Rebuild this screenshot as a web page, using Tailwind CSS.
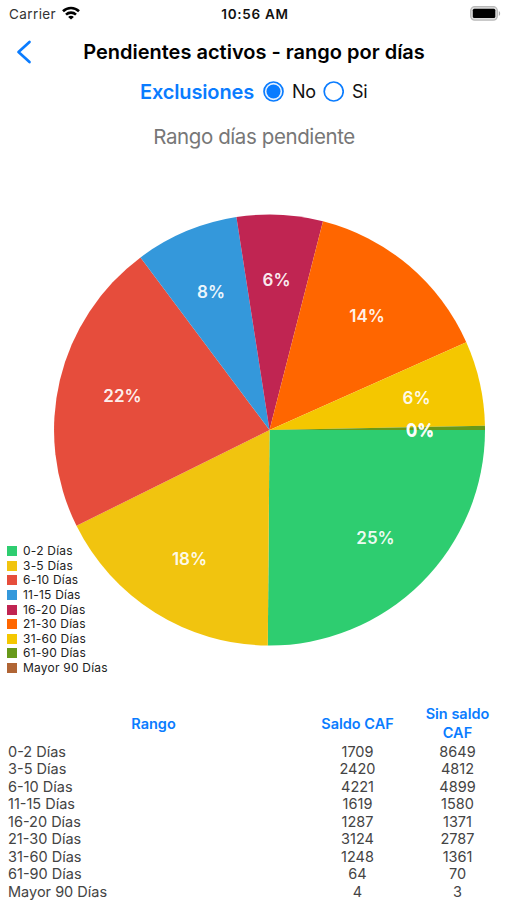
<!DOCTYPE html>
<html lang="es">
<head>
<meta charset="utf-8">
<title>Pendientes activos</title>
<script src="https://cdn.jsdelivr.net/npm/@tailwindcss/browser@4"></script>
</head>
<body class="bg-white">
<div class="relative flex h-[900px] w-[507px] flex-col overflow-hidden bg-white font-[Inter,sans-serif] text-black">
  <header class="grid h-7 grid-cols-3 items-center pr-[6px] pl-[9px]">
    <div class="flex items-center gap-[6px]">
      <span class="text-[13.5px] tracking-[0.4px] text-[#333]">Carrier</span>
      <svg class="-mt-[2px] h-[14px] w-[18px]" viewBox="0 0 18 14" fill="none" stroke="#000" stroke-width="2.600">
        <path d="M1 5.200C5.500 .9 12.500 .9 17 5.200"/><path d="M4 8.600C6.800 6 11.200 6 14 8.600"/><path d="M9 13.600L6.100 10.900C7.700 9.400 10.300 9.400 11.900 10.900Z" fill="#000" stroke="none"/>
      </svg>
    </div>
    <div class="text-center text-[13.5px] font-semibold tracking-[0.7px] whitespace-nowrap text-[#111]">10:56 AM</div>
    <svg class="-mt-[1px] h-[15px] w-[31px] justify-self-end" viewBox="0 0 31 15">
      <rect x=".7" y=".7" width="26.600" height="13.400" rx="4" fill="#ddd" stroke="#b8b8b8" stroke-width="1.300"/>
      <rect x="2.800" y="2.700" width="22.500" height="9.400" rx="1.500" fill="#000"/>
      <path d="M28.800 5v5c1.800-.8 1.800-4.200 0-5Z" fill="#aaa"/>
    </svg>
  </header>
  <nav class="grid h-[48px] grid-cols-[36px_1fr_35px] items-center">
    <svg class="ml-[16px] h-6 w-4" viewBox="0 0 16 24" fill="none" stroke="#0a7cff" stroke-width="2.700" stroke-linecap="round" stroke-linejoin="round"><path d="M13.500 2L2.500 12L13.500 22"/></svg>
    <h1 class="text-center text-[20px] font-semibold whitespace-nowrap">Pendientes activos - rango por días</h1>
  </nav>
  <div class="flex h-8 items-center pl-[140px] whitespace-nowrap">
    <span class="w-[123px] text-[20px] font-semibold tracking-[-0.15px] text-[#0a7cff]">Exclusiones</span>
    <svg class="size-[21px]" viewBox="0 0 21 21"><circle cx="10.500" cy="10.500" r="9.500" fill="#e8f3ff" stroke="#0a7cff" stroke-width="1.700"/><circle cx="10.500" cy="10.500" r="7" fill="#0a7cff"/></svg>
    <span class="ml-[8px] w-[31px] text-[18px] tracking-[-0.4px] text-[#111]">No</span>
    <svg class="size-[21px]" viewBox="0 0 21 21"><circle cx="10.700" cy="10.500" r="9.500" fill="#fff" stroke="#0a7cff" stroke-width="1.700"/></svg>
    <span class="ml-[8px] text-[18px] tracking-[-0.3px] text-[#111]">Si</span>
  </div>
  <h2 class="flex h-[58px] items-center justify-center pt-[2px] pl-px text-[20.5px] tracking-[-0.4px] text-[#777]">Rango días pendiente</h2>
  <main class="relative h-[538px]">
    <svg class="h-[538px] w-[507px]" viewBox="0 166 507 538">
      <path fill="#2ecd70" d="M269.500 430L485 430A215.500 215.500 0 0 1 267.800 645.500Z"/>
      <path fill="#f1c40f" d="M269.500 430L267.800 645.500A215.500 215.500 0 0 1 76.500 525.800Z"/>
      <path fill="#e64d3c" d="M269.500 430L76.500 525.800A215.500 215.500 0 0 1 140.500 257.400Z"/>
      <path fill="#3498db" d="M269.500 430L140.500 257.400A215.500 215.500 0 0 1 236.400 217.100Z"/>
      <path fill="#c02552" d="M269.500 430L236.400 217.100A215.500 215.500 0 0 1 323 221.200Z"/>
      <path fill="#ff6600" d="M269.500 430L323 221.200A215.500 215.500 0 0 1 466.300 342.300Z"/>
      <path fill="#f4c700" d="M269.500 430L466.300 342.300A215.500 215.500 0 0 1 484.950 425.800Z"/>
      <path fill="#67991a" d="M269.500 430L484.950 425.800A215.500 215.500 0 0 1 485 430Z"/>
      <g fill="#fff" fill-opacity=".93" font-size="17" font-weight="600" text-anchor="middle">
        <text x="375.500" y="544">25%</text><text x="189.500" y="565">18%</text><text x="122.500" y="402">22%</text>
        <text x="211" y="298">8%</text><text x="276.500" y="286">6%</text><text x="367" y="322">14%</text><text x="416.500" y="404">6%</text>
        <text x="420" y="435.500">0%</text><text x="420.300" y="436.500">0%</text>
      </g>
    </svg>
    <ul id="legend" class="absolute top-[378.5px] left-[7px] text-[12px] tracking-[0.22px] text-[#222]"></ul>
  </main>
  <table class="w-[507px] table-fixed border-collapse text-[14.5px] text-[#444]">
    <colgroup><col class="w-[307px]"><col class="w-[101px]"><col class="w-[99px]"></colgroup>
    <thead class="text-[14.5px] leading-[19.5px] text-[#0a7cff]"><tr class="h-[38px]"><th class="p-0 pt-px font-semibold">Rango</th><th class="p-0 pt-px font-semibold">Saldo CAF</th><th class="p-0 font-semibold">Sin saldo<br>CAF</th></tr></thead>
    <tbody id="rows" class="leading-[17.5px]"></tbody>
  </table>
</div>
<script>
const data = [
  ['0-2 Días',1709,8649,'#2ecd70'],['3-5 Días',2420,4812,'#f1c40f'],['6-10 Días',4221,4899,'#e64d3c'],
  ['11-15 Días',1619,1580,'#3498db'],['16-20 Días',1287,1371,'#c02552'],['21-30 Días',3124,2787,'#ff6600'],
  ['31-60 Días',1248,1361,'#f4c700'],['61-90 Días',64,70,'#67991a'],['Mayor 90 Días',4,3,'#b06535']];
document.getElementById('legend').innerHTML = data.map(d => `<li class="flex h-[14.58px] items-center gap-[6px] whitespace-nowrap"><span class="size-[10px]" style="background:${d[3]}"></span><span>${d[0]}</span></li>`).join('');
document.getElementById('rows').innerHTML = data.map(d => `<tr class="h-[17.5px]"><td class="p-0 pl-[8px]">${d[0]}</td><td class="p-0 text-center">${d[1]}</td><td class="p-0 text-center">${d[2]}</td></tr>`).join('');
</script>
</body>
</html>
